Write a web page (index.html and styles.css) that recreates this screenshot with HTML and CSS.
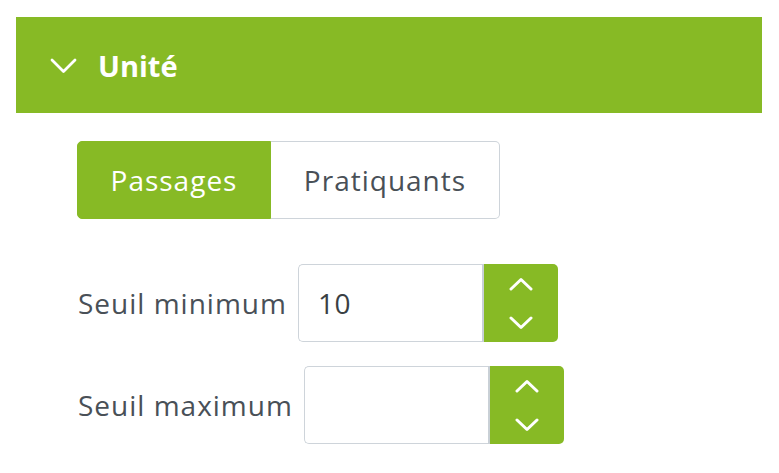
FILE: index.html
```html
<!DOCTYPE html>
<html lang="fr">
<head>
<meta charset="utf-8">
<link rel="stylesheet" href="styles.css">
</head>
<body>
<section class="panel">
  <div class="panel-header">
    <svg class="chev" width="27" height="16" viewBox="0 0 27 16"><path d="M2 2 L13.5 13.5 L25 2" fill="none" stroke="#fff" stroke-width="2.8" stroke-linecap="round" stroke-linejoin="round"/></svg>
    <span class="title">Unité</span>
  </div>
  <div class="panel-body">
    <div class="toggle">
      <button class="tbtn active">Passages</button>
      <button class="tbtn">Pratiquants</button>
    </div>
    <div class="row first">
      <label class="lbl">Seuil minimum</label>
      <div class="numeric">
        <div class="num-input">10</div>
        <div class="spin">
          <svg width="24" height="14" viewBox="0 0 24 14"><path d="M2 12 L12 2.5 L22 12" fill="none" stroke="#fff" stroke-width="3" stroke-linecap="round" stroke-linejoin="round"/></svg>
          <svg width="24" height="14" viewBox="0 0 24 14"><path d="M2 2 L12 11.5 L22 2" fill="none" stroke="#fff" stroke-width="3" stroke-linecap="round" stroke-linejoin="round"/></svg>
        </div>
      </div>
    </div>
    <div class="row">
      <label class="lbl">Seuil maximum</label>
      <div class="numeric">
        <div class="num-input"></div>
        <div class="spin">
          <svg width="24" height="14" viewBox="0 0 24 14"><path d="M2 12 L12 2.5 L22 12" fill="none" stroke="#fff" stroke-width="3" stroke-linecap="round" stroke-linejoin="round"/></svg>
          <svg width="24" height="14" viewBox="0 0 24 14"><path d="M2 2 L12 11.5 L22 2" fill="none" stroke="#fff" stroke-width="3" stroke-linecap="round" stroke-linejoin="round"/></svg>
        </div>
      </div>
    </div>
  </div>
</section>
</body>
</html>
```
FILE: styles.css
```css
* { box-sizing: border-box; }
body {
  margin: 0;
  padding: 17px 17px 0 16px;
  background: #fff;
  font-family: "Open Sans", "Noto Sans", sans-serif;
  color: #495057;
}
.panel-header {
  height: 96px;
  background: #87ba25;
  display: flex;
  align-items: center;
  padding-left: 34px;
  gap: 21px;
  color: #fff;
}
.chev { display: block; margin-top: 1px; }
.title {
  font-weight: 700;
  font-size: 29px;
  line-height: 1;
}
.panel-body {
  padding: 28px 0 0 61px;
}
.toggle {
  display: inline-flex;
}
.tbtn {
  height: 78px;
  font-family: inherit;
  font-size: 28px;
  letter-spacing: 1px;
  color: #495057;
  background: #fff;
  border: 1px solid #ced4da;
  margin: 0;
  padding: 0;
}
.tbtn.active {
  width: 194px;
  background: #87ba25;
  border-color: #87ba25;
  color: #fff;
  border-radius: 5px 0 0 5px;
}
.tbtn:not(.active) {
  width: 229px;
  border-left: none;
  border-radius: 0 5px 5px 0;
}
.row {
  display: flex;
  align-items: center;
  gap: 11px;
  margin-top: 24px;
}
.row.first { margin-top: 45px; }
.lbl {
  font-size: 28px;
  letter-spacing: 1px;
  padding-left: 1px;
}
.numeric {
  display: flex;
  height: 78px;
}
.num-input {
  width: 184px;
  border: 1px solid #ced4da;
  border-right: none;
  border-radius: 5px 0 0 5px;
  font-size: 28px;
  letter-spacing: 0.5px;
  display: flex;
  align-items: center;
  padding-left: 19px;
  color: #3a3f44;
}
.spin {
  width: 76px;
  background: #87ba25;
  border-radius: 0 5px 5px 0;
  border-left: 2px solid #c9d0d6;
  display: flex;
  flex-direction: column;
  align-items: center;
  justify-content: center;
  gap: 25px;
}
.spin svg { display: block; }
```
